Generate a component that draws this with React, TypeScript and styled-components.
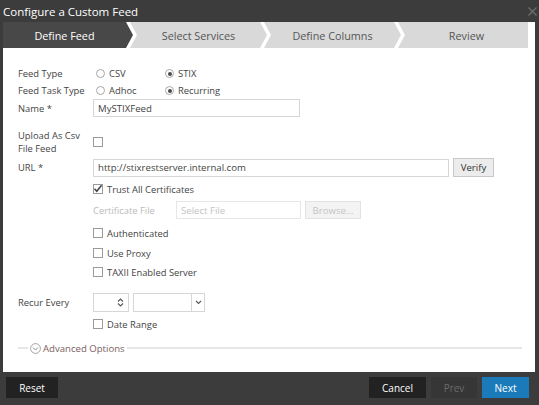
import styled, { createGlobalStyle } from 'styled-components';

const GlobalStyle = createGlobalStyle`
  html, body {
    margin: 0;
    padding: 0;
    background: #3c3c3c;
  }
  body {
    font-family: 'Open Sans', 'Liberation Sans', sans-serif;
  }
`;

const Dialog = styled.div`
  width: 539px;
  height: 405px;
  background: #3c3c3c;
  display: flex;
  flex-direction: column;
  overflow: hidden;
`;

const TitleBar = styled.div`
  height: 22px;
  flex: none;
  display: flex;
  align-items: center;
  justify-content: space-between;
  padding: 0 2px 0 3px;
  color: #ffffff;
  font-size: 11.5px;
`;

const CloseButton = styled.button`
  border: none;
  background: transparent;
  padding: 0;
  width: 10px;
  height: 12px;
  display: flex;
  align-items: center;
  justify-content: center;
`;

const Body = styled.div`
  margin: 0 4px 0 3px;
  height: 350px;
  flex: none;
  background: #ffffff;
  display: flex;
  flex-direction: column;
`;

const TabBar = styled.div`
  height: 26px;
  flex: none;
  margin-right: 7px;
  display: flex;
  background: #ffffff;
`;

const Tab = styled.div<{ $active?: boolean; $first?: boolean; $last?: boolean }>`
  flex: 1;
  margin-left: ${(p) => (p.$first ? '0' : '-3px')};
  display: flex;
  align-items: center;
  justify-content: center;
  font-size: 10.8px;
  background: ${(p) => (p.$active ? '#484848' : '#d9d9d9')};
  color: ${(p) => (p.$active ? '#ffffff' : '#555555')};
  padding-left: ${(p) => (p.$first ? '0' : '7px')};
  padding-right: ${(p) => (p.$last ? '0' : '7px')};
  clip-path: ${(p) =>
    p.$last
      ? 'polygon(0 0, 100% 0, 100% 100%, 0 100%, 7px 50%)'
      : p.$first
      ? 'polygon(0 0, calc(100% - 7px) 0, 100% 50%, calc(100% - 7px) 100%, 0 100%)'
      : 'polygon(0 0, calc(100% - 7px) 0, 100% 50%, calc(100% - 7px) 100%, 0 100%, 7px 50%)'};
`;

const Form = styled.div`
  padding: 17px 0 0 15px;
  display: flex;
  flex-direction: column;
  font-size: 9.4px;
  color: #444444;
`;

const Row = styled.div<{ $h: number; $mt?: number }>`
  display: flex;
  align-items: center;
  flex: none;
  height: ${(p) => p.$h}px;
  margin-top: ${(p) => p.$mt ?? 0}px;
`;

const Label = styled.div<{ $muted?: boolean }>`
  width: 75px;
  flex: none;
  line-height: 13px;
  color: ${(p) => (p.$muted ? '#bbbbbb' : '#444444')};
`;

const Indent = styled.div`
  width: 75px;
  flex: none;
`;

const RadioOption = styled.label<{ $w: number }>`
  width: ${(p) => p.$w}px;
  display: flex;
  align-items: center;
  gap: 4px;
  padding-left: 3px;
  box-sizing: border-box;
`;

const RadioCircle = styled.span<{ $checked?: boolean }>`
  width: 9px;
  height: 9px;
  box-sizing: border-box;
  border: 1px solid #a8a8a8;
  border-radius: 50%;
  background: #fff;
  display: flex;
  align-items: center;
  justify-content: center;
  &::after {
    content: '';
    width: 4px;
    height: 4px;
    border-radius: 50%;
    background: ${(p) => (p.$checked ? '#4a4a4a' : 'transparent')};
  }
`;

const TextInput = styled.div<{ $w: number; $muted?: boolean }>`
  width: ${(p) => p.$w}px;
  height: 18px;
  box-sizing: border-box;
  border: 1px solid #d6d6d6;
  padding: 0 4px;
  display: flex;
  align-items: center;
  font-size: 9.6px;
  color: ${(p) => (p.$muted ? '#c4c4c4' : '#444444')};
  border-color: ${(p) => (p.$muted ? '#e6e6e6' : '#d6d6d6')};
`;

const SmallButton = styled.button<{ $disabled?: boolean }>`
  height: 19px;
  margin-left: 4px;
  padding: 0 8px;
  font-family: inherit;
  font-size: 9.6px;
  border: 1px solid ${(p) => (p.$disabled ? '#e2e2e2' : '#c8c8c8')};
  background: ${(p) => (p.$disabled ? '#f3f3f3' : '#ececec')};
  color: ${(p) => (p.$disabled ? '#c4c4c4' : '#333333')};
  display: flex;
  align-items: center;
  justify-content: center;
`;

const CheckOption = styled.label`
  display: flex;
  align-items: center;
  gap: 4px;
`;

const CheckBox = styled.span`
  width: 10px;
  height: 10px;
  box-sizing: border-box;
  border: 1px solid #9a9a9a;
  background: #fff;
  display: flex;
  align-items: center;
  justify-content: center;
  overflow: visible;
`;

const Spinner = styled.div`
  width: 36px;
  height: 19px;
  box-sizing: border-box;
  border: 1px solid #d6d6d6;
  display: flex;
  align-items: center;
  justify-content: flex-end;
  padding-right: 4px;
`;

const Select = styled.div`
  width: 72px;
  height: 19px;
  margin-left: 4px;
  box-sizing: border-box;
  border: 1px solid #d6d6d6;
  display: flex;
  justify-content: flex-end;
`;

const SelectArrow = styled.div`
  width: 12px;
  border-left: 1px solid #d6d6d6;
  display: flex;
  align-items: center;
  justify-content: center;
`;

const Divider = styled.div`
  flex: 1;
  display: flex;
  align-items: center;
  gap: 2px;
  margin-right: 13px;
  color: #7d6262;
  font-size: 9.6px;
`;

const Line = styled.div<{ $grow?: boolean }>`
  height: 2px;
  background: #e6e6e6;
  width: ${(p) => (p.$grow ? 'auto' : '10px')};
  flex: ${(p) => (p.$grow ? 1 : 'none')};
`;

const Footer = styled.div`
  flex: 1;
  display: flex;
  align-items: center;
  padding: 0 10px 2px 6px;
  gap: 5px;
`;

const FooterButton = styled.button<{ $variant: 'dark' | 'disabled' | 'primary'; $w: number }>`
  width: ${(p) => p.$w}px;
  height: 21px;
  border: none;
  font-family: inherit;
  font-size: 10px;
  background: ${(p) =>
    p.$variant === 'primary' ? '#1b7bba' : p.$variant === 'disabled' ? '#363636' : '#222222'};
  color: ${(p) => (p.$variant === 'disabled' ? '#6b6b6b' : '#ffffff')};
`;

const Spacer = styled.div`
  flex: 1;
`;

const Radio = ({ label, checked, w }: { label: string; checked?: boolean; w: number }) => (
  <RadioOption $w={w}>
    <RadioCircle $checked={checked} />
    {label}
  </RadioOption>
);

const Check = ({ label, checked }: { label?: string; checked?: boolean }) => (
  <CheckOption>
    <CheckBox>
      {checked && (
        <svg width="10" height="10" viewBox="0 0 10 10" style={{ overflow: 'visible' }}>
          <path d="M1.5 4.8 L3.8 7.3 L8.6 1.2" fill="none" stroke="#444" strokeWidth="1.5" />
        </svg>
      )}
    </CheckBox>
    {label}
  </CheckOption>
);

const tabs = ['Define Feed', 'Select Services', 'Define Columns', 'Review'];

export default function App() {
  return (
    <Dialog>
      <GlobalStyle />
      <TitleBar>
        Configure a Custom Feed
        <CloseButton>
          <svg width="9" height="9" viewBox="0 0 9 9">
            <path d="M0.5 0.5 L8.5 8.5 M8.5 0.5 L0.5 8.5" stroke="#6e6e6e" strokeWidth="1.3" />
          </svg>
        </CloseButton>
      </TitleBar>
      <Body>
        <TabBar>
          {tabs.map((t, i) => (
            <Tab key={t} $active={i === 0} $first={i === 0} $last={i === tabs.length - 1}>
              {t}
            </Tab>
          ))}
        </TabBar>
        <Form>
          <Row $h={17}>
            <Label>Feed Type</Label>
            <Radio label="CSV" w={69} />
            <Radio label="STIX" checked w={80} />
          </Row>
          <Row $h={17}>
            <Label>Feed Task Type</Label>
            <Radio label="Adhoc" w={69} />
            <Radio label="Recurring" checked w={80} />
          </Row>
          <Row $h={18}>
            <Label>Name *</Label>
            <TextInput $w={207}>MySTIXFeed</TextInput>
          </Row>
          <Row $h={27} $mt={11}>
            <Label>
              Upload As Csv
              <br />
              File Feed
            </Label>
            <Check />
          </Row>
          <Row $h={19} $mt={3}>
            <Label>URL *</Label>
            <TextInput $w={356}>http://stixrestserver.internal.com</TextInput>
            <SmallButton style={{ width: 41 }}>Verify</SmallButton>
          </Row>
          <Row $h={16} $mt={4}>
            <Indent />
            <Check label="Trust All Certificates" checked />
          </Row>
          <Row $h={18} $mt={4}>
            <Indent />
            <Label $muted style={{ width: 83 }}>
              Certificate File
            </Label>
            <TextInput $w={125} $muted>
              Select File
            </TextInput>
            <SmallButton $disabled style={{ height: 18, width: 56 }}>
              Browse...
            </SmallButton>
          </Row>
          <Row $h={16} $mt={6}>
            <Indent />
            <Check label="Authenticated" />
          </Row>
          <Row $h={16} $mt={4}>
            <Indent />
            <Check label="Use Proxy" />
          </Row>
          <Row $h={16} $mt={3}>
            <Indent />
            <Check label="TAXII Enabled Server" />
          </Row>
          <Row $h={19} $mt={13}>
            <Label>Recur Every</Label>
            <Spinner>
              <svg width="7" height="9" viewBox="0 0 7 9">
                <path d="M1 3.5 L3.5 1 L6 3.5 M1 5.5 L3.5 8 L6 5.5" fill="none" stroke="#555" strokeWidth="1.1" />
              </svg>
            </Spinner>
            <Select>
              <SelectArrow>
                <svg width="7" height="5" viewBox="0 0 7 5">
                  <path d="M1 1 L3.5 3.5 L6 1" fill="none" stroke="#555" strokeWidth="1.1" />
                </svg>
              </SelectArrow>
            </Select>
          </Row>
          <Row $h={16} $mt={4}>
            <Indent />
            <Check label="Date Range" />
          </Row>
          <Row $h={16} $mt={8}>
            <Divider>
              <Line />
              <svg width="11" height="11" viewBox="0 0 11 11">
                <circle cx="5.5" cy="5.5" r="4.9" fill="none" stroke="#9a9a9a" strokeWidth="0.9" />
                <path d="M3 4.5 L5.5 7 L8 4.5" fill="none" stroke="#8a8a8a" strokeWidth="1" />
              </svg>
              <span>Advanced Options</span>
              <Line $grow />
            </Divider>
          </Row>
        </Form>
      </Body>
      <Footer>
        <FooterButton $variant="dark" $w={52}>
          Reset
        </FooterButton>
        <Spacer />
        <FooterButton $variant="dark" $w={57}>
          Cancel
        </FooterButton>
        <FooterButton $variant="disabled" $w={46}>
          Prev
        </FooterButton>
        <FooterButton $variant="primary" $w={47}>
          Next
        </FooterButton>
      </Footer>
    </Dialog>
  );
}
